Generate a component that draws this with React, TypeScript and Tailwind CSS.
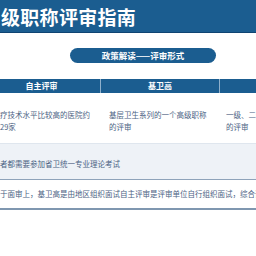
import React from "react";

export default function App() {
  const font = { fontFamily: '"Noto Sans CJK SC", "Noto Sans", sans-serif' };
  return (
    <div className="w-[256px] h-[256px] overflow-hidden bg-white" style={font}>
      <div className="h-[33px] bg-[#1b5d90] border-b border-[#0f4472] flex items-center">
        <span className="pl-[1px] text-[19px] leading-none font-bold text-white whitespace-nowrap tracking-[0.3px]">
          级职称评审指南
        </span>
      </div>
      <div className="mt-[15px] ml-[70px] w-[146px] h-[15px] rounded-full bg-[#1b5d90] flex items-center justify-center">
        <span className="text-[8.5px] leading-none font-bold text-white whitespace-nowrap">
          政策解读——评审形式
        </span>
      </div>
      <div className="mt-[16px] ml-[-17px] w-[400px]">
        <div className="grid grid-cols-[118px_119px_163px] h-[14px] bg-[#1b5d90] text-white text-[8px] font-bold leading-none">
          <div className="flex items-center justify-center border-r border-[#8fb0cc]">自主评审</div>
          <div className="flex items-center justify-center border-r border-[#8fb0cc]">基卫高</div>
          <div className="flex items-center justify-center">综合评审</div>
        </div>
        <div className="grid grid-cols-[118px_119px_163px] h-[51px] text-[7.5px] leading-[12px] text-[#4b6283] border-b border-[#dfe6ee] whitespace-nowrap">
          <div className="pt-[16px] pl-[17px]">
            <div>疗技术水平比较高的医院约</div>
            <div>29家</div>
          </div>
          <div className="pt-[16px] pl-[8px]">
            <div>基层卫生系列的一个高级职称</div>
            <div>的评审</div>
          </div>
          <div className="pt-[16px] pl-[6px]">
            <div>一级、二级医院及其他单位</div>
            <div>的评审</div>
          </div>
        </div>
        <div className="h-[36px] bg-[#eef2f7] border-b border-[#8ea3ba] flex items-center pt-[4px] pl-[17px] text-[7.5px] text-[#4b6283] whitespace-nowrap">
          者都需要参加省卫统一专业理论考试
        </div>
        <div className="h-[30px] bg-white border-b-2 border-[#7f97b0] flex items-center pl-[17px] text-[7.5px] text-[#4b6283] whitespace-nowrap">
          于面审上，基卫高是由地区组织面试自主评审是评审单位自行组织面试，综合评审
        </div>
      </div>
    </div>
  );
}
